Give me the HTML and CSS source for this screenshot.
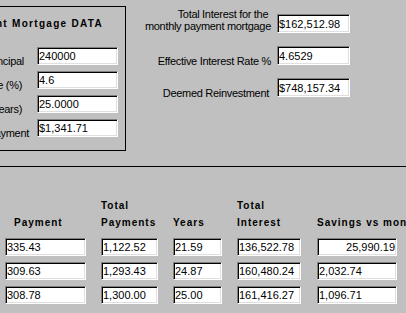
FILE: index.html
```html
<!DOCTYPE html>
<html lang="en">
<head>
<meta charset="utf-8">
<title>Mortgage</title>
<link rel="stylesheet" href="styles.css">
</head>
<body>
<div class="page">
  <div class="top">
    <div class="groupbox">
      <div class="gb-title">Current Mortgage DATA</div>
      <div class="gb-grid">
        <span class="lbl">Principal</span><input class="fld" type="text" value="240000" readonly>
        <span class="lbl lbl-in">Interest Rate (%)</span><input class="fld" type="text" value="4.6" readonly>
        <span class="lbl lbl-in">Term (Years)</span><input class="fld" type="text" value="25.0000" readonly>
        <span class="lbl lbl-out">Monthly Payment</span><input class="fld" type="text" value="$1,341.71" readonly>
      </div>
    </div>
    <div class="summary">
      <span class="lbl lbl-two">Total Interest for the&nbsp;<br>monthly payment mortgage</span><input class="fld tall" type="text" value="$162,512.98" readonly>
      <span class="lbl">Effective Interest Rate %</span><input class="fld tall" type="text" value="4.6529" readonly>
      <span class="lbl lbl-in">Deemed Reinvestment</span><input class="fld tall" type="text" value="$748,157.34" readonly>
    </div>
  </div>
  <div class="rule"></div>
  <div class="results">
    <div class="hd hd-pay">Payment</div>
    <div class="hd">Total<br>Payments</div>
    <div class="hd">Years</div>
    <div class="hd">Total<br>Interest</div>
    <div class="hd">Savings vs monthly</div>

    <input class="fld c1" type="text" value="335.43" readonly>
    <input class="fld c2" type="text" value="1,122.52" readonly>
    <input class="fld c3" type="text" value="21.59" readonly>
    <input class="fld c4" type="text" value="136,522.78" readonly>
    <input class="fld c5 right" type="text" value="25,990.19" readonly>

    <input class="fld c1" type="text" value="309.63" readonly>
    <input class="fld c2" type="text" value="1,293.43" readonly>
    <input class="fld c3" type="text" value="24.87" readonly>
    <input class="fld c4" type="text" value="160,480.24" readonly>
    <input class="fld c5" type="text" value="2,032.74" readonly>

    <input class="fld c1" type="text" value="308.78" readonly>
    <input class="fld c2" type="text" value="1,300.00" readonly>
    <input class="fld c3" type="text" value="25.00" readonly>
    <input class="fld c4" type="text" value="161,416.27" readonly>
    <input class="fld c5" type="text" value="1,096.71" readonly>
  </div>
</div>
</body>
</html>
```
FILE: styles.css
```css
html, body {
  margin: 0;
  padding: 0;
  background: #c0c0c0;
  overflow: hidden;
}
body {
  width: 406px;
  height: 313px;
  font-family: "Liberation Sans", Arial, sans-serif;
  font-size: 11px;
  color: #000;
}
.top {
  display: flex;
  align-items: flex-start;
  height: 166px;
}
.groupbox {
  box-sizing: border-box;
  flex: none;
  width: 190px;
  height: 145px;
  margin: 6px 0 0 -64px;
  border: 1px solid #000;
  padding: 10px 7px 0 0;
}
.gb-title {
  font-weight: bold;
  font-size: 10px;
  letter-spacing: 1.3px;
  line-height: 13px;
  text-align: right;
  margin: 0 15px 17px 0;
  white-space: nowrap;
}
.gb-grid {
  display: grid;
  grid-template-columns: 1fr 81px;
  column-gap: 13px;
  row-gap: 6px;
}
.lbl {
  text-align: right;
  line-height: 12px;
  letter-spacing: -0.3px;
  align-self: end;
  margin-bottom: -2px;
  white-space: nowrap;
}
.lbl-in { margin-right: 2px; }
.lbl-out { margin-right: -5px; }
.lbl-two { margin: -6px 0 1px 0; }
.fld {
  box-sizing: border-box;
  display: block;
  width: 100%;
  height: 18px;
  margin: 0;
  padding: 0 1px 0 1px;
  border: 1px solid;
  border-color: #808080 #fff #fff #808080;
  box-shadow: inset 1px 1px 0 #000, inset -1px -1px 0 #dfdfdf;
  border-radius: 0;
  background: #fff;
  color: #000;
  font-family: "Liberation Sans", Arial, sans-serif;
  font-size: 11px;
  outline: none;
  appearance: none;
}
.fld.tall { height: 19px; }
.summary {
  flex: none;
  margin-left: 4px;
  padding-top: 14px;
  display: grid;
  grid-template-columns: 141px 73px;
  column-gap: 6px;
  row-gap: 13px;
}
.rule {
  height: 1px;
  background: #000;
}
.results {
  display: grid;
  grid-template-columns: 96px 72px 64px 80px 89px;
  row-gap: 6px;
  padding: 31px 0 0 5px;
}
.hd {
  font-weight: bold;
  font-size: 10px;
  letter-spacing: 1px;
  line-height: 16.5px;
  align-self: end;
  white-space: nowrap;
  margin-bottom: 1px;
}
.hd-pay { padding-left: 9px; }
.c1 { width: 81px; }
.c2 { width: 57px; }
.c3 { width: 49px; }
.c4 { width: 64px; }
.c5 { width: 80px; }
.right { text-align: right; }
```
